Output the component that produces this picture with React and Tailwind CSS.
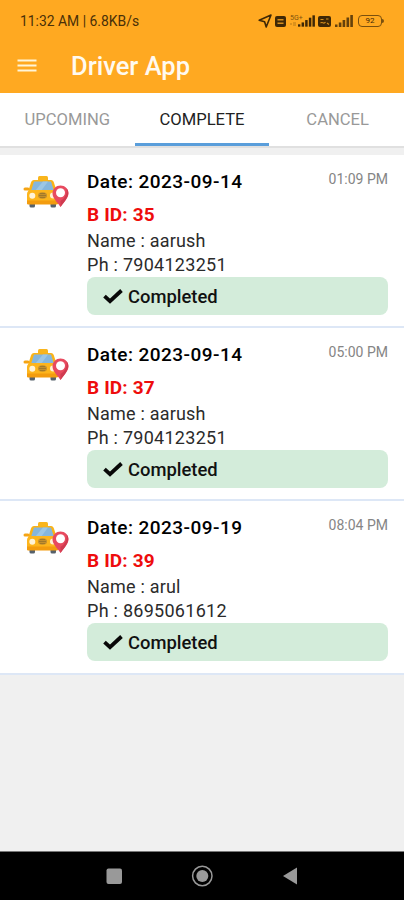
import React from "react";

const rides = [
  { date: "2023-09-14", id: 35, name: "aarush", phone: "7904123251", time: "01:09 PM" },
  { date: "2023-09-14", id: 37, name: "aarush", phone: "7904123251", time: "05:00 PM" },
  { date: "2023-09-19", id: 39, name: "arul", phone: "8695061612", time: "08:04 PM" },
];

function SignalBars({ className }) {
  return (
    <svg className={className} viewBox="0 0 18 12" fill="currentColor">
      <rect x="0" y="9.500" width="2.500" height="2.500" />
      <rect x="3.800" y="7.500" width="2.600" height="4.500" />
      <rect x="7.600" y="5" width="2.600" height="7" />
      <rect x="11.500" y="2.500" width="2.600" height="9.500" />
      <rect x="15.300" y="0" width="2.600" height="12" />
    </svg>
  );
}

function StatusIcons() {
  return (
    <div className="flex items-center text-[#3f2806]">
      <svg className="h-[14px] w-[14px]" viewBox="0 0 14 14" fill="none" stroke="currentColor" strokeWidth="1.600" strokeLinejoin="round">
        <path d="M1.200 6.200 13 1 8.200 13 6.600 7.800Z" />
      </svg>
      <svg className="ml-[3px] h-[11px] w-[11px]" viewBox="0 0 11 11">
        <rect width="11" height="11" rx="2" fill="currentColor" />
        <path d="M2.500 3h6v1.500h-6zM2.500 6.500h6V8h-6z" fill="#d68e1c" />
      </svg>
      <div className="ml-[4px] flex w-[13px] flex-col pb-[1px] text-[#80540f]">
        <span className="text-[7px] leading-[6px]">5G+</span>
        <svg className="mt-[1px] h-[4px] w-[6px]" viewBox="0 0 6 4" fill="none" stroke="#b87a18" strokeWidth="1">
          <path d="M0 2h2M3 1h3M3 3h3" />
        </svg>
      </div>
      <SignalBars className="-ml-[5px] h-[12px] w-[17px]" />
      <svg className="ml-[3px] h-[11px] w-[13px]" viewBox="0 0 13 11">
        <rect width="13" height="11" rx="2" fill="currentColor" />
        <path d="M2.500 3.500h3M2.500 7c2-2 3 2 5-1M8 3h2.500M9 7l2 1.500" stroke="#d68e1c" strokeWidth="1.100" fill="none" />
      </svg>
      <SignalBars className="ml-[4px] h-[12px] w-[18px] opacity-80" />
      <div className="ml-[5px] flex h-[12px] w-[24px] items-center justify-center rounded-[4px] border border-[#7a500e] text-[8px] leading-none">92</div>
      <div className="h-[4px] w-[2px] rounded-r bg-[#7a500e]" />
    </div>
  );
}

function TaxiIcon() {
  return (
    <svg className="h-[34px] w-[46px]" viewBox="0 0 46 34">
      <rect x="6.500" y="26" width="5.500" height="6.500" rx="1.500" fill="#56616b" />
      <rect x="27.500" y="26" width="5.500" height="6.500" rx="1.500" fill="#56616b" />
      <rect x="15" y="1" width="10" height="5" rx="1.500" fill="#f9b51c" />
      <path d="M11 5h17c1.600 0 2.400 1 2.900 2.400L34 17H5l3-9.600C8.500 6 9.400 5 11 5Z" fill="#fbb316" />
      <path d="M11 6.500h17L31 16H8Z" fill="#85b6dc" />
      <path d="M20 6.500h5L18 16h-6Z" fill="#9cc6e4" />
      <rect x="0.500" y="12.500" width="6" height="3" rx="1.500" fill="#f5a414" />
      <rect x="32" y="12.500" width="6" height="3" rx="1.500" fill="#f5a414" />
      <path d="M8 15h23c2.500 0 4 2 4 4v10H4V19c0-2 1.500-4 4-4Z" fill="#fdb51c" />
      <path d="M4 25.500h31V28c0 1-.8 1.500-1.500 1.500h-28C4.600 29.500 4 29 4 28Z" fill="#f39c0e" />
      <circle cx="9.300" cy="20.800" r="3" fill="#fff3d6" />
      <circle cx="30" cy="20.500" r="3" fill="#fff3d6" />
      <ellipse cx="19.500" cy="20.500" rx="4.500" ry="3.300" fill="#c48f2c" />
      <path d="M16 20.500h7M17 18.500h5M17 22.500h5" stroke="#98732a" strokeWidth=".8" />
      <path d="M37.500 10.500c4.400 0 8 3.400 8 7.800 0 4.700-4.500 8.700-8 13.700-3.500-5-8-9-8-13.700 0-4.400 3.600-7.800 8-7.800Z" fill="#e84a5f" />
      <path d="M43.500 13c4 5 1 10-6 19v-6c5-3 7-7 6-13Z" fill="#cf3b50" />
      <circle cx="37.500" cy="17.800" r="4.500" fill="#fff" />
    </svg>
  );
}

function RideCard({ ride }) {
  return (
    <li className="flex h-[173.200px] border-b-2 border-[#dde7f6] bg-white pl-[23px] pr-4">
      <div className="w-16 shrink-0 pt-[20px]">
        <TaxiIcon />
      </div>
      <div className="flex-1 pt-[15px] text-black">
        <div className="flex items-start justify-between">
          <h2 className="whitespace-nowrap text-[19px] font-medium leading-[24px] tracking-[0.450px]">Date: {ride.date}</h2>
          <span className="whitespace-nowrap text-[14px] leading-[18px] text-[#858585]">{ride.time}</span>
        </div>
        <p className="mt-[8px] text-[19px] font-bold leading-[26px] tracking-[0.150px] text-[#ee0c0c]">B ID: {ride.id}</p>
        <p className="pt-px text-[18px] leading-[24px] tracking-[0.200px] text-[#2b2b2b]">Name : {ride.name}</p>
        <p className="text-[18px] leading-[24px] tracking-[0.270px] text-[#2b2b2b]">Ph : {ride.phone}</p>
        <div className="flex h-[38px] items-center rounded-[8px] bg-[#d3ecda] pl-[16px]">
          <svg className="h-[15px] w-[20px]" viewBox="0 0 20 15" fill="none" stroke="#080808" strokeWidth="3.800">
            <path d="M1.500 7.200 7 12.200 18.500 1.500" />
          </svg>
          <span className="ml-[5px] pt-[2px] text-[18.400px] font-medium leading-[24px] text-[#111]">Completed</span>
        </div>
      </div>
    </li>
  );
}

export default function App() {
  return (
    <div className="flex h-[900px] w-[404px] flex-col overflow-hidden bg-[#f0f0f0] font-['Roboto',sans-serif]">
      <header className="h-[93px] shrink-0 bg-[#ffa921]">
        <div className="flex h-[42px] items-center justify-between pl-[20px] pr-[20px]">
          <span className="whitespace-nowrap pt-[2px] text-[13.900px] leading-none text-[#4a3008]">11:32 AM | 6.8KB/s</span>
          <StatusIcons />
        </div>
        <div className="flex h-[48px] items-center pl-[17px]">
          <svg className="h-[14px] w-[20px]" viewBox="0 0 20 14" stroke="#fff5d8" strokeWidth="2">
            <path d="M0.500 1.500h19M0.500 6.500h19M0.500 11.500h19" />
          </svg>
          <h1 className="ml-[34px] pt-[2px] text-[25.500px] font-medium leading-none text-[#fffaf0]">Driver App</h1>
        </div>
      </header>
      <nav className="grid h-[52.500px] shrink-0 grid-cols-3 bg-white text-[16.600px]">
        <button className="border-b-[3px] border-transparent pt-[5px] text-[#999]">UPCOMING</button>
        <button className="border-b-[3px] border-[#5a9edb] pt-[5px] text-[#222]">COMPLETE</button>
        <button className="border-b-[3px] border-transparent pt-[5px] pl-[2px] text-[#999]">CANCEL</button>
      </nav>
      <div className="h-[9.500px] shrink-0 border-t-2 border-[#e0e0e0] bg-[#f0f0f0]" />
      <ul className="shrink-0">
        {rides.map((ride) => (
          <RideCard key={ride.id} ride={ride} />
        ))}
      </ul>
      <div className="flex-1" />
      <footer className="flex h-[49px] shrink-0 items-center border-t border-[#777] bg-black pl-[106px]">
        <svg className="h-[24px] w-[192px]" viewBox="0 0 192 24" fill="#999">
          <rect x="0.500" y="4.500" width="15.500" height="15.500" rx="2" />
          <circle cx="96.300" cy="12" r="9.700" fill="none" stroke="#999" strokeWidth="1.500" />
          <circle cx="96.300" cy="12" r="6" />
          <path d="M191 3.500v17L177 12Z" />
        </svg>
      </footer>
    </div>
  );
}
